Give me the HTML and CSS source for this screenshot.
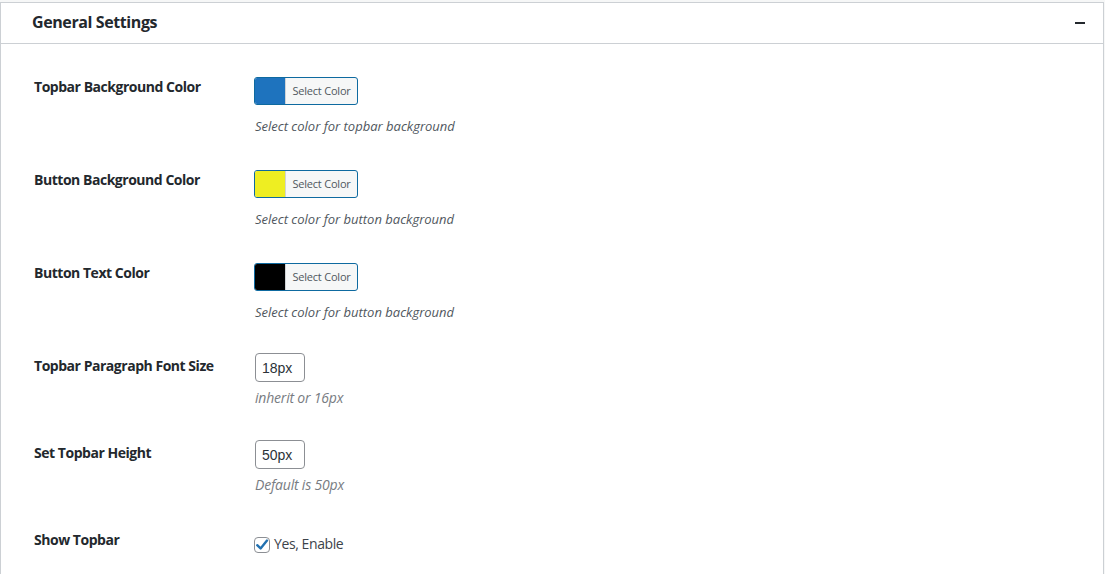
FILE: index.html
```html
<!DOCTYPE html>
<html>
<head>
<meta charset="utf-8">
<link rel="stylesheet" href="styles.css">
</head>
<body>
<div class="postbox">
  <div class="postbox-header">
    <h2 class="hndle">General Settings</h2>
    <span class="toggle"></span>
  </div>
  <div class="inside">
    <div class="row row-color">
      <div class="label">Topbar Background Color</div>
      <div class="field">
        <button class="color-result"><span class="swatch" style="background:#1e73be"></span><span class="color-text">Select Color</span></button>
        <p class="description">Select color for topbar background</p>
      </div>
    </div>
    <div class="row row-color">
      <div class="label">Button Background Color</div>
      <div class="field">
        <button class="color-result"><span class="swatch" style="background:#eeee22"></span><span class="color-text">Select Color</span></button>
        <p class="description">Select color for button background</p>
      </div>
    </div>
    <div class="row row-color">
      <div class="label">Button Text Color</div>
      <div class="field">
        <button class="color-result"><span class="swatch" style="background:#000000"></span><span class="color-text">Select Color</span></button>
        <p class="description">Select color for button background</p>
      </div>
    </div>
    <div class="row row-input">
      <div class="label">Topbar Paragraph Font Size</div>
      <div class="field">
        <input class="small-text" type="text" value="18px">
        <p class="description light">inherit or 16px</p>
      </div>
    </div>
    <div class="row row-input">
      <div class="label">Set Topbar Height</div>
      <div class="field">
        <input class="small-text" type="text" value="50px">
        <p class="description light">Default is 50px</p>
      </div>
    </div>
    <div class="row row-check">
      <div class="label">Show Topbar</div>
      <div class="field">
        <label class="check">
          <span class="box"><svg width="14" height="14" viewBox="0 0 14 14"><path d="M2.2 7.2 L5.6 10.4 L12 2.6" fill="none" stroke="#2271b1" stroke-width="2.4" stroke-linecap="round" stroke-linejoin="round"/></svg></span>
          <span class="check-text">Yes, Enable</span>
        </label>
      </div>
    </div>
  </div>
</div>
</body>
</html>
```

FILE: styles.css
```css
html, body {
  margin: 0;
  padding: 0;
  background: #f6f7f7;
}
body {
  font-family: "Open Sans", "Noto Sans", sans-serif;
  color: #1d2327;
  width: 1105px;
  height: 574px;
  overflow: hidden;
}
.postbox {
  margin-top: 2px;
  width: 1102px;
  height: 571px;
  border: 1px solid #ccd0d4;
  border-bottom: none;
  background: #fff;
}
.postbox-header {
  height: 40px;
  border-bottom: 1px solid #ccd0d4;
  display: flex;
  align-items: center;
  justify-content: space-between;
  padding: 0 18px 0 31px;
}
.hndle {
  margin: 0;
  font-size: 16px;
  font-weight: 700;
  color: #23282d;
  letter-spacing: -0.4px;
  line-height: 20px;
  position: relative;
  top: -1px;
}
.toggle {
  display: block;
  width: 10px;
  height: 2px;
  background: #23282d;
}
.inside {
  padding: 18px 0 0 33px;
}
.row {
  display: flex;
}
.label {
  width: 220px;
  flex: none;
  font-size: 14px;
  font-weight: 700;
  color: #23282d;
  line-height: 18px;
  padding-top: 16px;
  letter-spacing: -0.47px;
}
.field {
  display: flex;
  flex-direction: column;
  align-items: flex-start;
}
.row-color { height: 93px; }
.row-color .field { padding-top: 15px; }
.row-input { height: 87px; }
.row-input .field { padding-top: 12px; }
.row-check { height: 39px; }
.row-check .field { padding-top: 20px; }

.color-result {
  display: flex;
  align-items: stretch;
  height: 28px;
  width: 104px;
  padding: 0;
  margin: 0;
  border: 1px solid #0e6aa0;
  border-radius: 3px;
  background: #f6f7f7;
  overflow: hidden;
  cursor: pointer;
  font-family: inherit;
}
.swatch {
  width: 30px;
  flex: none;
  border-right: 1px solid #d0d3d6;
}
.color-text {
  flex: 1;
  font-size: 11px;
  color: #50575e;
  line-height: 26px;
  text-align: center;
  letter-spacing: -0.2px;
}
.description {
  margin: 11px 0 0 1px;
  font-size: 13px;
  font-style: italic;
  line-height: 20px;
  color: #50575e;
  letter-spacing: 0;
}
.description.light {
  margin-top: 6px;
  font-size: 14px;
  letter-spacing: -0.2px;
  color: #787c82;
}
.small-text {
  width: 50px;
  height: 29px;
  box-sizing: border-box;
  margin: 0 0 0 1px;
  padding: 0 6px;
  border: 1px solid #8c8f94;
  border-radius: 4px;
  font-family: "Liberation Sans", Arial, sans-serif;
  font-size: 14px;
  color: #2c3338;
  background: #fff;
}
.check {
  display: flex;
  align-items: center;
  gap: 4px;
}
.box {
  width: 16px;
  height: 16px;
  box-sizing: border-box;
  border: 1px solid #8c8f94;
  border-radius: 4px;
  display: flex;
  align-items: center;
  justify-content: center;
  background: #fff;
}
.box svg { display: block; }
.check-text {
  font-size: 14px;
  color: #3c434a;
  line-height: 20px;
  position: relative;
  top: -1px;
  letter-spacing: -0.4px;
}
```
